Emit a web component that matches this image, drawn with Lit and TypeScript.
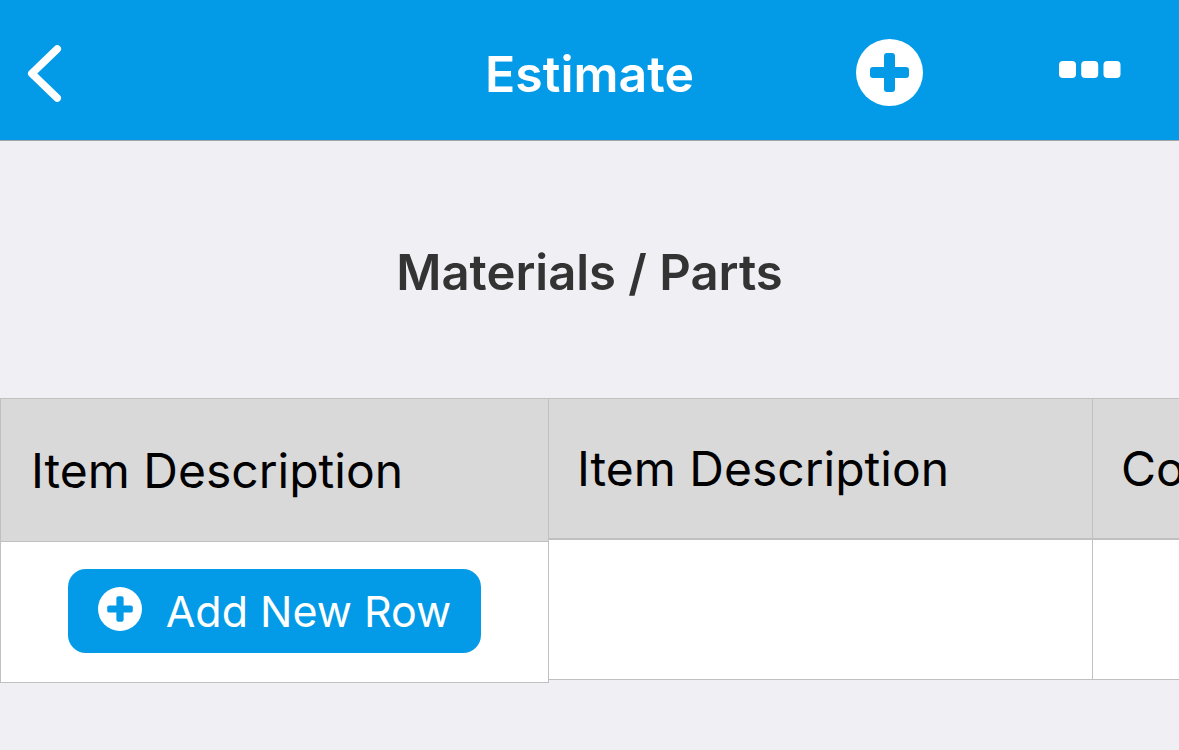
import { LitElement, html, css, svg } from "lit";
import { customElement } from "lit/decorators.js";

const plusCircle = svg`
  <circle cx="33.5" cy="33.5" r="33.5" fill="#fff"></circle>
  <rect x="28" y="14" width="11" height="39" rx="3" fill="#039be7"></rect>
  <rect x="14" y="28" width="39" height="11" rx="3" fill="#039be7"></rect>`;

@customElement("app-bar")
class AppBar extends LitElement {
  static styles = css`
    :host {
      display: block;
    }
    .bar {
      display: grid;
      grid-template-columns: 1fr auto 1fr;
      align-items: center;
      height: 140px;
      background: #039be7;
      border-bottom: 1px solid #a3a3a8;
    }
    button {
      display: block;
      margin: 0;
      padding: 0;
      border: 0;
      background: none;
      cursor: pointer;
    }
    svg {
      display: block;
    }
    .back {
      margin-left: 26px;
      padding-top: 8px;
      justify-self: start;
    }
    .title {
      margin: 0;
      padding-top: 8px;
      color: #fff;
      font-size: 50px;
      line-height: 60px;
      font-weight: 600;
    }
    .actions {
      display: flex;
      align-items: center;
      justify-content: flex-end;
      gap: 136px;
      padding-right: 58px;
    }
    .add {
      padding-top: 4px;
    }
    .more {
      padding-bottom: 2px;
    }
  `;

  render() {
    return html`
      <header class="bar">
        <button class="back" aria-label="Back">
          <svg width="38" height="60" viewBox="0 0 38 60" fill="none" stroke="#fff" stroke-width="7.6" stroke-linecap="round" stroke-linejoin="round">
            <path d="M31.2 5 L5.8 29.5 L31.2 54"></path>
          </svg>
        </button>
        <h1 class="title">Estimate</h1>
        <div class="actions">
          <button class="add" aria-label="Add">
            <svg width="67" height="67" viewBox="0 0 67 67">${plusCircle}</svg>
          </button>
          <button class="more" aria-label="More">
            <svg width="62" height="17" viewBox="0 0 62 17" fill="#fff">
              <rect x="0" y="0" width="17" height="17" rx="4"></rect>
              <rect x="22.2" y="0" width="17" height="17" rx="4"></rect>
              <rect x="44.5" y="0" width="17" height="17" rx="4"></rect>
            </svg>
          </button>
        </div>
      </header>
    `;
  }
}

@customElement("estimate-table")
class EstimateTable extends LitElement {
  static styles = css`
    :host {
      display: flex;
      align-items: flex-start;
      overflow: hidden;
    }
    table {
      border-collapse: separate;
      border-spacing: 0;
      table-layout: fixed;
      flex: none;
      font-size: 48px;
      line-height: 60px;
      color: #000;
    }
    th,
    td {
      box-sizing: border-box;
      border: 0 solid #c0c0c0;
      border-right-width: 1px;
      text-align: left;
      font-weight: 400;
      white-space: nowrap;
    }
    th {
      background: #d9d9d9;
      border-top-width: 1px;
    }
    td {
      background: #fff;
      border-bottom-width: 1px;
    }
    .pinned {
      width: 549px;
    }
    .pinned th,
    .pinned td {
      border-left-width: 1px;
    }
    .pinned th {
      height: 144px;
      padding: 2px 30px 0;
      border-bottom-width: 1px;
    }
    .pinned td {
      height: 141px;
      padding: 0 0 2px;
    }
    .scroller {
      flex: 1;
      min-width: 0;
      overflow: hidden;
    }
    .data {
      width: 1088px;
    }
    .data th {
      height: 142px;
      padding: 1px 28px 0;
      border-bottom-width: 2px;
    }
    .data td {
      height: 140px;
    }
    .add-row {
      display: flex;
      align-items: center;
      gap: 24px;
      height: 84px;
      margin: 0 auto;
      padding: 0 30px;
      border: 0;
      border-radius: 18px;
      background: #039be7;
      color: #fff;
      font-family: inherit;
      font-size: 43px;
      line-height: 54px;
      font-weight: 400;
      cursor: pointer;
    }
    .add-row svg {
      display: block;
      margin-bottom: 4px;
    }
  `;

  render() {
    return html`
      <table class="pinned">
        <thead>
          <tr><th scope="col">Item Description</th></tr>
        </thead>
        <tbody>
          <tr>
            <td>
              <button class="add-row">
                <svg width="44" height="44" viewBox="0 0 67 67" aria-hidden="true">${plusCircle}</svg>
                <span>Add New Row</span>
              </button>
            </td>
          </tr>
        </tbody>
      </table>
      <div class="scroller">
        <table class="data">
          <thead>
            <tr>
              <th scope="col">Item Description</th>
              <th scope="col">Cost</th>
            </tr>
          </thead>
          <tbody>
            <tr>
              <td></td>
              <td></td>
            </tr>
          </tbody>
        </table>
      </div>
    `;
  }
}

@customElement("app-root")
class AppRoot extends LitElement {
  static styles = css`
    :host {
      display: block;
      min-height: 100vh;
      background: #efeff4;
      font-family: Inter, "Liberation Sans", sans-serif;
    }
    .section-title {
      margin: 0;
      padding: 102px 0 95px;
      text-align: center;
      color: #333;
      font-size: 49px;
      line-height: 60px;
      font-weight: 600;
    }
  `;

  render() {
    return html`
      <app-bar></app-bar>
      <main>
        <h2 class="section-title">Materials / Parts</h2>
        <estimate-table></estimate-table>
      </main>
    `;
  }
}
